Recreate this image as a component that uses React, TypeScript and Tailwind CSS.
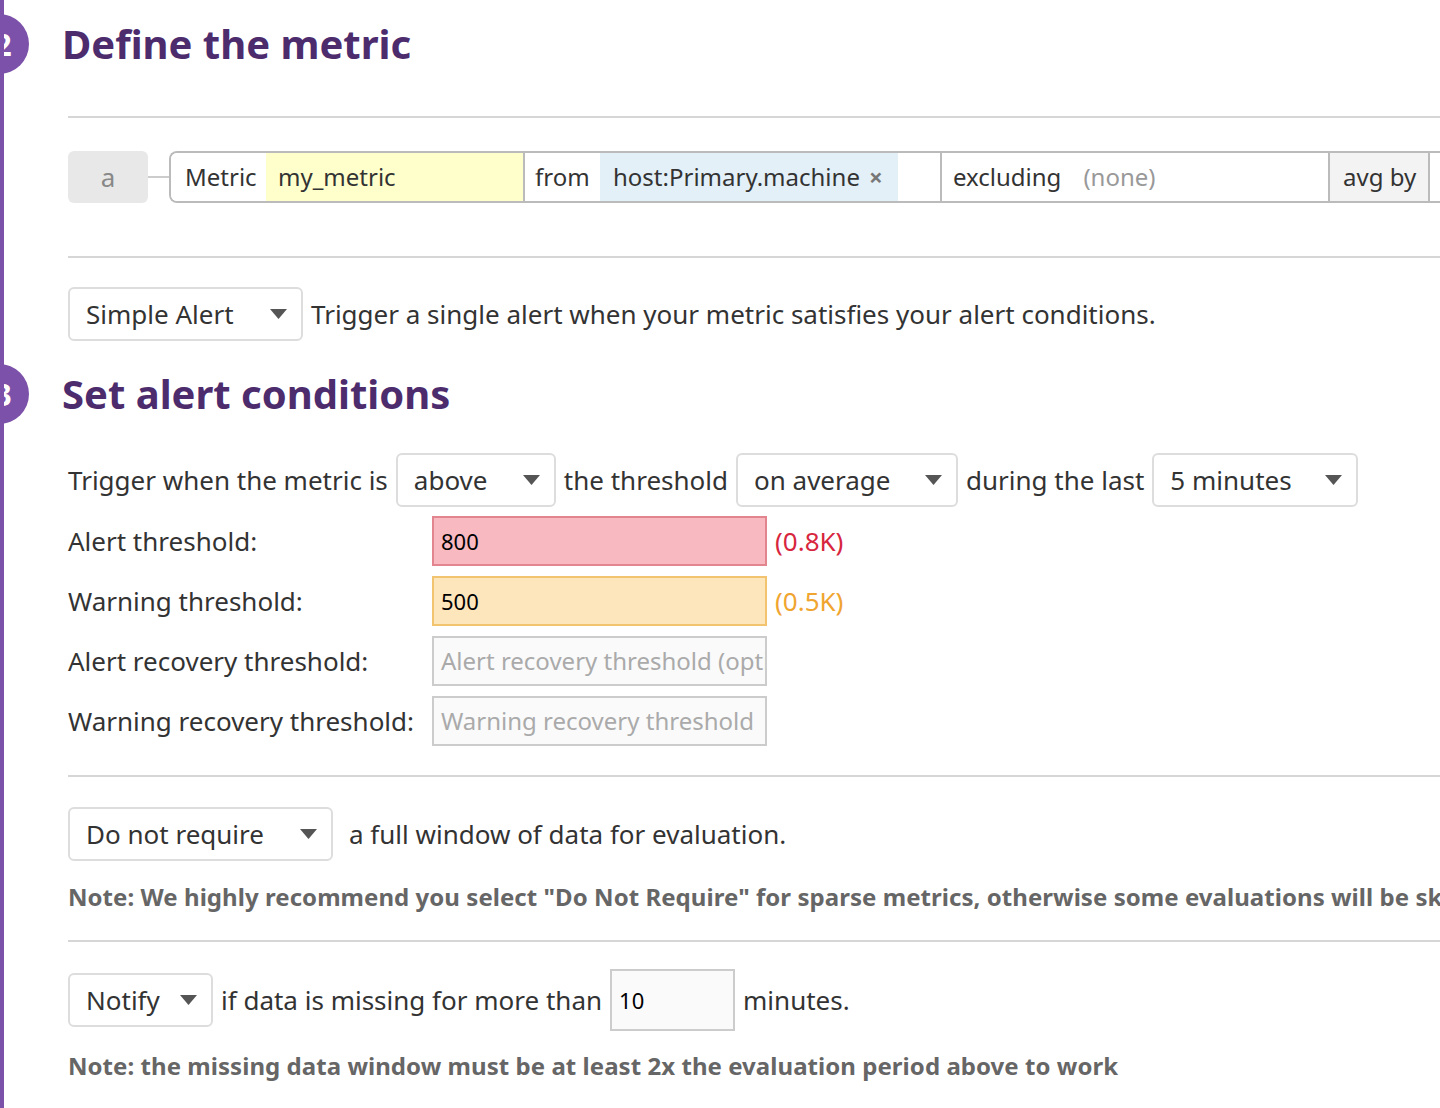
import React from 'react';

const Caret: React.FC = () => (
  <svg width="17" height="10" viewBox="0 0 17 10" className="shrink-0">
    <path d="M0 0 L17 0 L8.5 10 Z" fill="#555" />
  </svg>
);

interface SelectProps {
  label: string;
  widthClass: string;
}

const Select: React.FC<SelectProps> = ({ label, widthClass }) => (
  <div
    className={`${widthClass} h-[54px] shrink-0 border-2 border-[#ddd] rounded-md bg-white flex items-center justify-between pl-[16px] pr-[14px] text-[26px] text-[#333]`}
  >
    <span className="whitespace-nowrap">{label}</span>
    <Caret />
  </div>
);

const StepBadge: React.FC<{ n: number }> = ({ n }) => (
  <div className="absolute left-[-99px] top-1/2 -translate-y-1/2 w-[60px] h-[60px] rounded-full bg-[#7c51a9] text-white font-bold text-[30px] flex items-center justify-center">
    <span className="translate-x-[4px]">{n}</span>
  </div>
);

interface ThresholdRowProps {
  label: string;
  value?: string;
  placeholder?: string;
  inputClass: string;
  hint?: string;
  hintClass?: string;
}

const ThresholdRow: React.FC<ThresholdRowProps> = ({ label, value, placeholder, inputClass, hint, hintClass }) => (
  <div className="flex items-center h-[50px]">
    <div className="w-[364px] shrink-0 text-[26px]">{label}</div>
    <div
      className={`w-[335px] h-[50px] shrink-0 border-2 flex items-center pl-[7px] overflow-hidden whitespace-nowrap ${inputClass}`}
    >
      {value ? (
        <span className="text-[22px] text-black">{value}</span>
      ) : (
        <span className="text-[24px] text-[#aaa]">{placeholder}</span>
      )}
    </div>
    {hint && <span className={`ml-[8px] text-[26px] ${hintClass}`}>{hint}</span>}
  </div>
);

const Rule: React.FC<{ className?: string }> = ({ className }) => (
  <div className={`h-[2px] bg-[#d6d6d6] ${className ?? ''}`} />
);

export default function App() {
  return (
    <div className="relative w-[1440px] h-[1108px] overflow-hidden bg-white border-l-4 border-[#7c51a9] font-['Noto_Sans',sans-serif] text-[#333]">
      <div className="pl-[64px] pt-[20px]">
        {/* step 2 */}
        <div className="relative h-[48px] flex items-center">
          <StepBadge n={2} />
          <h1 className="-ml-[6px] text-[40px] leading-[48px] font-bold text-[#4d2c6d]">Define the metric</h1>
        </div>

        <Rule className="mt-[48px]" />

        <div className="mt-[33px] flex items-center h-[52px]">
          <div className="w-[80px] h-[52px] shrink-0 rounded-md bg-[#e8e8e8] flex items-center justify-center text-[26px] text-[#888]">
            a
          </div>
          <div className="w-[21px] h-[2px] shrink-0 bg-[#ccc]" />
          <div className="flex h-[52px] shrink-0 border-2 border-r-0 border-[#bbb] rounded-l-lg overflow-hidden text-[24px] whitespace-nowrap">
            <div className="w-[95px] flex items-center pl-[14px] bg-white">Metric</div>
            <div className="w-[259px] flex items-center pl-[12px] bg-[#ffffcc] border-r-2 border-[#bbb]">my_metric</div>
            <div className="w-[75px] flex items-center pl-[10px] bg-white">from</div>
            <div className="w-[298px] flex items-center pl-[13px] bg-[#e3f0f8]">
              host:Primary.machine
              <span className="ml-[9px] text-[24px] leading-none text-[#777] font-bold">×</span>
            </div>
            <div className="w-[44px] bg-white border-r-2 border-[#bbb]" />
            <div className="w-[388px] flex items-center pl-[11px] bg-white border-r-2 border-[#bbb]">
              excluding
              <span className="ml-[22px] text-[#999]">(none)</span>
            </div>
            <div className="w-[100px] flex items-center pl-[13px] bg-[#f3f3f3] border-r-2 border-[#bbb]">avg by</div>
            <div className="w-[200px] bg-white" />
          </div>
        </div>

        <Rule className="mt-[53px]" />

        <div className="mt-[29px] flex items-center gap-2 text-[26px]">
          <Select label="Simple Alert" widthClass="w-[235px]" />
          <span className="whitespace-nowrap">Trigger a single alert when your metric satisfies your alert conditions.</span>
        </div>

        {/* step 3 */}
        <div className="relative mt-[29px] h-[48px] flex items-center">
          <StepBadge n={3} />
          <h1 className="-ml-[6px] text-[40px] leading-[48px] font-bold text-[#4d2c6d]">Set alert conditions</h1>
        </div>

        <div className="mt-[35px] flex items-center gap-2 text-[26px] whitespace-nowrap">
          <span>Trigger when the metric is</span>
          <Select label="above" widthClass="w-[160px]" />
          <span>the threshold</span>
          <Select label="on average" widthClass="w-[222px]" />
          <span>during the last</span>
          <Select label="5 minutes" widthClass="w-[206px]" />
        </div>

        <div className="mt-[9px] flex flex-col gap-[10px]">
          <ThresholdRow
            label="Alert threshold:"
            value="800"
            inputClass="bg-[#f8b9c0] border-[#e2858f]"
            hint="(0.8K)"
            hintClass="text-[#d7263d]"
          />
          <ThresholdRow
            label="Warning threshold:"
            value="500"
            inputClass="bg-[#fde5bc] border-[#f2c46f]"
            hint="(0.5K)"
            hintClass="text-[#f0a530]"
          />
          <ThresholdRow
            label="Alert recovery threshold:"
            placeholder="Alert recovery threshold (optional)"
            inputClass="bg-[#fafafa] border-[#ccc]"
          />
          <ThresholdRow
            label="Warning recovery threshold:"
            placeholder="Warning recovery threshold"
            inputClass="bg-[#fafafa] border-[#ccc]"
          />
        </div>

        <Rule className="mt-[29px]" />

        <div className="mt-[30px] flex items-center gap-4 text-[26px]">
          <Select label="Do not require" widthClass="w-[265px]" />
          <span className="whitespace-nowrap">a full window of data for evaluation.</span>
        </div>

        <p className="mt-[20px] h-[32px] leading-[32px] text-[24px] font-bold text-[#666] whitespace-nowrap tracking-[0.05px]">
          Note: We highly recommend you select "Do Not Require" for sparse metrics, otherwise some evaluations will be skipped.
        </p>

        <Rule className="mt-[27px]" />

        <div className="mt-[27px] flex items-center gap-2 h-[62px] text-[26px] whitespace-nowrap">
          <Select label="Notify" widthClass="w-[145px]" />
          <span>if data is missing for more than</span>
          <div className="w-[125px] h-[62px] shrink-0 border-2 border-[#ccc] bg-[#fafafa] flex items-center pl-[7px] text-[22px] text-black">
            10
          </div>
          <span>minutes.</span>
        </div>

        <p className="mt-[19px] h-[32px] leading-[32px] text-[24px] font-bold text-[#666] whitespace-nowrap tracking-[0.05px]">
          Note: the missing data window must be at least 2x the evaluation period above to work
        </p>
      </div>
    </div>
  );
}
